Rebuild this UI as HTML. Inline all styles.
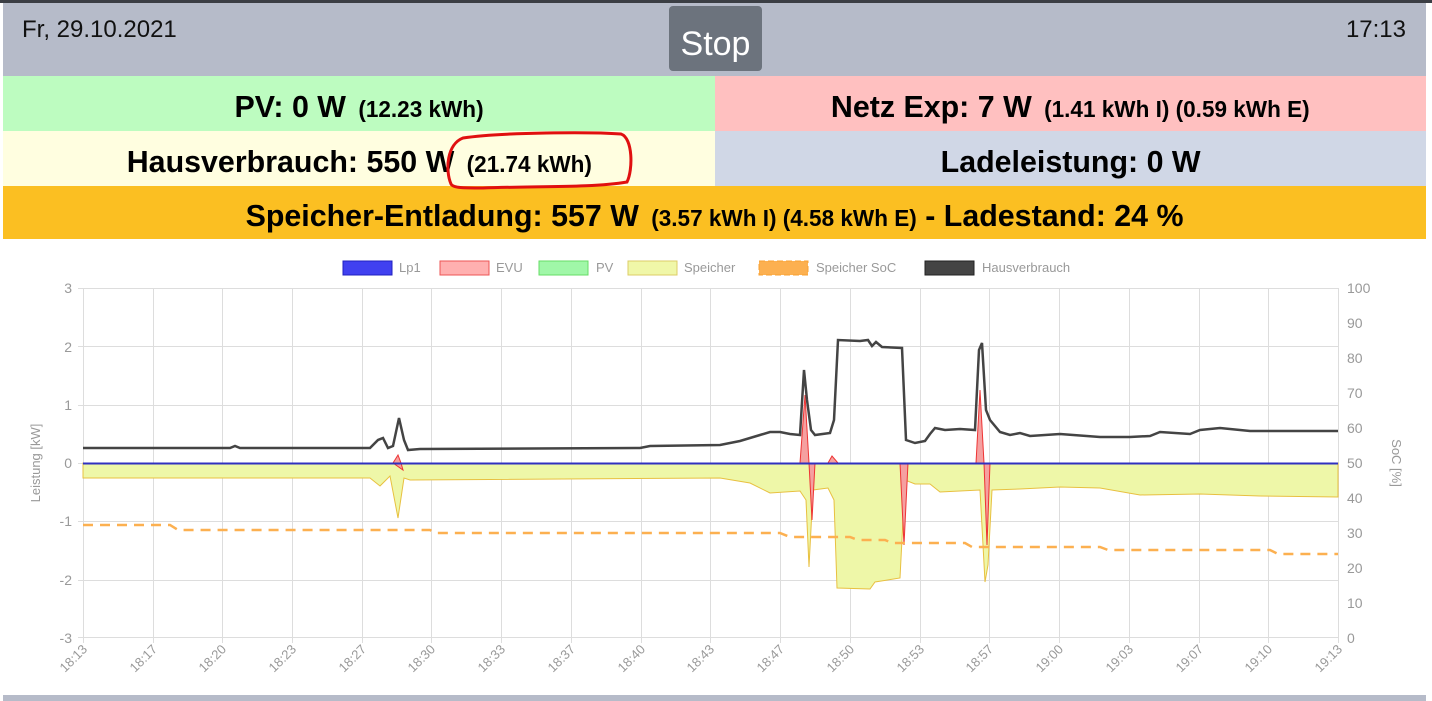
<!DOCTYPE html>
<html><head><meta charset="utf-8"><style>
*{margin:0;padding:0;box-sizing:border-box}
body{width:1432px;height:701px;background:#fff;font-family:"Liberation Sans",sans-serif;position:relative;overflow:hidden}
.top{position:absolute;left:0;top:0;width:1432px;height:3px;background:#3b3e44}
.hdr{position:absolute;left:3px;top:3px;width:1423px;height:73px;background:#b6bbc9}
.date{position:absolute;left:19px;top:13px;font-size:24px;color:#111}
.time{position:absolute;right:20px;top:13px;font-size:24px;color:#111}
.stop{position:absolute;left:666px;top:3px;width:93px;height:65px;background:#6c737d;border-radius:4px;color:#fff;font-size:34px;text-align:center;line-height:76px}
.cell{position:absolute;text-align:center;font-weight:bold;font-size:31px;color:#000;white-space:nowrap}
.cell span{display:inline-block;transform:scaleX(0.98)}
.cell small{font-size:23px;margin-left:4px}
.bot{position:absolute;left:3px;top:695px;width:1423px;height:6px;background:#b6bbc9}
</style></head><body>
<div class="top"></div>
<div class="hdr"><div class="date">Fr, 29.10.2021</div><div class="stop">Stop</div><div class="time">17:13</div></div>
<div class="cell" style="left:3px;top:76px;width:712px;height:55px;line-height:62px;background:#bdfcc0"><span>PV: 0 W <small>(12.23 kWh)</small></span></div>
<div class="cell" style="left:715px;top:76px;width:711px;height:55px;line-height:62px;background:#ffc0c0"><span>Netz Exp: 7 W <small>(1.41 kWh I) (0.59 kWh E)</small></span></div>
<div class="cell" style="left:3px;top:131px;width:712px;height:55px;line-height:62px;background:#fffee0"><span>Hausverbrauch: 550 W <small>(21.74 kWh)</small></span></div>
<div class="cell" style="left:715px;top:131px;width:711px;height:55px;line-height:62px;background:#d0d7e6"><span>Ladeleistung: 0 W</span></div>
<div class="cell" style="left:3px;top:186px;width:1423px;height:53px;line-height:60px;background:#fbbf22"><span>Speicher-Entladung: 557 W <small>(3.57 kWh I) (4.58 kWh E)</small> - Ladestand: 24 %</span></div>
<svg style="position:absolute;left:443px;top:130px" width="195" height="62"><path d="M8 54 C2 40 4 14 20 8 C60 2 150 2 178 4 C190 8 190 40 184 52 C150 58 90 56 40 58 C20 58 10 58 8 54" fill="none" stroke="#e01010" stroke-width="3"/></svg>
<svg style="position:absolute;left:0;top:250px" width="1432" height="445" font-family="Liberation Sans" font-size="13" fill="#999">
<g transform="translate(0,-250)">
<g stroke="#ddd" stroke-width="1">
<line x1="83" y1="288.5" x2="1338" y2="288.5"/><line x1="83" y1="346.5" x2="1338" y2="346.5"/><line x1="83" y1="405.5" x2="1338" y2="405.5"/><line x1="83" y1="521.5" x2="1338" y2="521.5"/><line x1="83" y1="580.5" x2="1338" y2="580.5"/><line x1="83" y1="637.5" x2="1338" y2="637.5"/>
<path d="M83.5 288V643M153.5 288V643M222.5 288V643M292.5 288V643M362.5 288V643M431.5 288V643M501.5 288V643M571.5 288V643M641.5 288V643M710.5 288V643M780.5 288V643M850.5 288V643M920.5 288V643M989.5 288V643M1059.5 288V643M1129.5 288V643M1199.5 288V643M1268.5 288V643M1338.5 288V643"/>
<path d="M78 288.5H83M78 346.5H83M78 405.5H83M78 463.5H83M78 521.5H83M78 580.5H83M78 637.5H83"/>
</g>
<g text-anchor="end" font-size="14"><text x="72" y="293">3</text><text x="72" y="352">2</text><text x="72" y="410">1</text><text x="72" y="468">0</text><text x="72" y="526">-1</text><text x="72" y="585">-2</text><text x="72" y="643">-3</text></g>
<g font-size="14"><text x="1347" y="293">100</text><text x="1347" y="328">90</text><text x="1347" y="363">80</text><text x="1347" y="398">70</text><text x="1347" y="433">60</text><text x="1347" y="468">50</text><text x="1347" y="503">40</text><text x="1347" y="538">30</text><text x="1347" y="573">20</text><text x="1347" y="608">10</text><text x="1347" y="643">0</text></g>
<text transform="translate(40,463) rotate(-90)" text-anchor="middle">Leistung [kW]</text>
<text transform="translate(1392,463) rotate(90)" text-anchor="middle">SoC [%]</text>
<g text-anchor="end">
<text transform="translate(88,650) rotate(-45)">18:13</text><text transform="translate(158,650) rotate(-45)">18:17</text><text transform="translate(227,650) rotate(-45)">18:20</text><text transform="translate(297,650) rotate(-45)">18:23</text><text transform="translate(367,650) rotate(-45)">18:27</text><text transform="translate(436,650) rotate(-45)">18:30</text><text transform="translate(506,650) rotate(-45)">18:33</text><text transform="translate(576,650) rotate(-45)">18:37</text><text transform="translate(646,650) rotate(-45)">18:40</text><text transform="translate(715,650) rotate(-45)">18:43</text><text transform="translate(785,650) rotate(-45)">18:47</text><text transform="translate(855,650) rotate(-45)">18:50</text><text transform="translate(925,650) rotate(-45)">18:53</text><text transform="translate(994,650) rotate(-45)">18:57</text><text transform="translate(1064,650) rotate(-45)">19:00</text><text transform="translate(1134,650) rotate(-45)">19:03</text><text transform="translate(1204,650) rotate(-45)">19:07</text><text transform="translate(1273,650) rotate(-45)">19:10</text><text transform="translate(1343,650) rotate(-45)">19:13</text></g>
<path d="M83 463L83 478L370 478L380 486L390 476L398 518L404 478L410 480L720 478L750 483L770 493L800 491L806 500L809 567L813 490L828 488L834 500L837 588L870 589L875 582L900 578L905 480L915 484L930 484L940 492L980 490L985 582L988 565L992 490L1020 489L1060 487L1100 488L1140 495L1200 494L1260 496L1338 497L1338 463Z" fill="#eef7a8" stroke="#e8c040" stroke-width="1"/>
<path d="M800 463L805 395L809 463L812 520L815 463Z M828 463L832 456L838 463Z M900 463L904 545L908 463Z M976 463L980 390L984 463L987 545L990 463Z M393 463L398 455L401 463L403 470Z" fill="#f5a0a0" stroke="#e33" stroke-width="1"/>
<line x1="83" y1="463.5" x2="1338" y2="463.5" stroke="#3030c0" stroke-width="2"/>
<path d="M83 525H170L178 530H430L436 533H780L790 537H850L858 540H885L892 543H965L972 547H1100L1108 550H1270L1278 554H1338" fill="none" stroke="#fcb050" stroke-width="2.5" stroke-dasharray="10,7"/>
<path d="M83 448L230 448L235 446L240 448L370 448L378 440L383 438L388 448L393 446L399 418L404 440L408 450L420 449L640 448L650 446L720 445L740 441L760 435L770 432L780 432L790 434L800 435L804 370L807 400L811 430L815 435L830 433L834 420L838 340L860 341L868 340L872 346L876 342L882 347L902 348L906 440L915 443L925 441L930 434L935 428L945 430L960 429L975 430L979 350L982 343L986 410L990 420L1000 432L1010 435L1020 433L1030 436L1060 434L1100 437L1130 437L1150 436L1160 432L1190 434L1200 430L1220 428L1250 431L1338 431" fill="none" stroke="#444" stroke-width="2.5"/>
<g font-size="13">
<rect x="343" y="261" width="49" height="14" fill="#4040f0" stroke="#2020c0"/><text x="399" y="272">Lp1</text>
<rect x="440" y="261" width="49" height="14" fill="#ffb0b0" stroke="#e55"/><text x="496" y="272">EVU</text>
<rect x="539" y="261" width="49" height="14" fill="#a0f7a8" stroke="#6d6"/><text x="596" y="272">PV</text>
<rect x="628" y="261" width="49" height="14" fill="#f0f7a8" stroke="#dc6"/><text x="684" y="272">Speicher</text>
<rect x="759" y="261" width="49" height="14" fill="#fcb050" stroke="#f9a030" stroke-dasharray="6,3"/><text x="816" y="272">Speicher SoC</text>
<rect x="925" y="261" width="49" height="14" fill="#444" stroke="#222"/><text x="982" y="272">Hausverbrauch</text>
</g>
</g></svg>
<div class="bot"></div>
</body></html>
